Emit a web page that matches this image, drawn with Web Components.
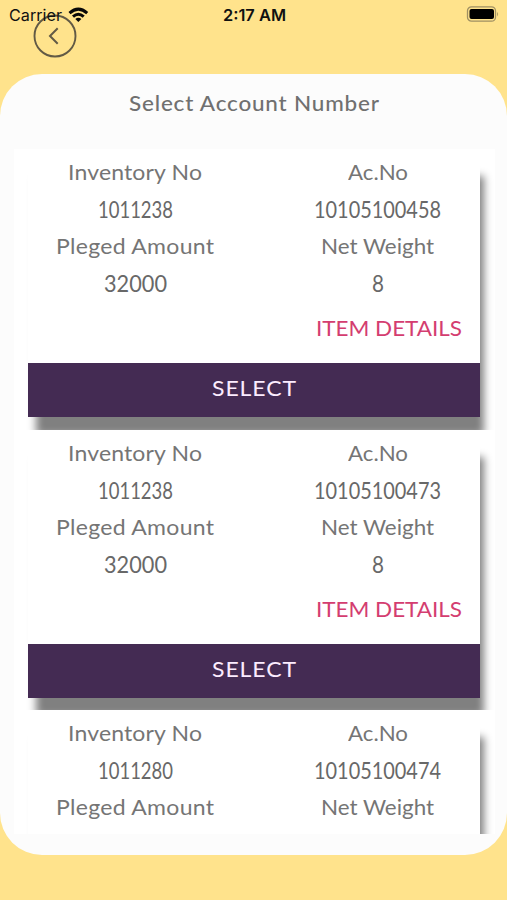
<!DOCTYPE html>
<html lang="en"><head><meta charset="utf-8"><title>Select Account Number</title>
<style>html,body{margin:0;height:100%}body{background:#ffe38c;overflow:hidden;font-family:Lato,"Open Sans",sans-serif;color:#757575}</style></head>
<body>
<account-screen></account-screen>
<script>
// Text run with a fixed width: glyphs are widened up to 7%, tracking takes the rest;
// mode "scale" uses glyph scaling alone.
customElements.define('fit-text', class extends HTMLElement {
  connectedCallback() {
    const text = this.getAttribute('text'), w = +this.getAttribute('w');
    const root = this.attachShadow({mode: 'open'});
    root.innerHTML = `<style>:host{display:inline-block;white-space:nowrap;width:${w}px;text-align:left}span{display:inline-block;transform-origin:0 50%}</style><span></span>`;
    const s = root.querySelector('span');
    s.textContent = text;
    const natural = s.getBoundingClientRect().width, ratio = w / natural;
    const k = this.getAttribute('mode') === 'scale' ? ratio : Math.min(ratio, 1.07);
    s.style.transform = `scaleX(${k})`;
    if (text.length > 1) s.style.letterSpacing = (w / k - natural) / (text.length - 1) + 'px';
  }
});

customElements.define('status-bar', class extends HTMLElement {
  constructor() {
    super();
    this.attachShadow({mode: 'open'}).innerHTML = `<style>
      :host{display:grid;grid-template-columns:1fr auto 1fr;align-items:center;height:30px;padding:0 8px 0 9px;font-family:Inter,"Liberation Sans",sans-serif;font-size:16px;color:#111;line-height:30px;box-sizing:border-box}
      .l{display:flex;align-items:center;gap:6px}.t{font-weight:600}.r{justify-self:end;display:flex}svg{display:block}
    </style>
    <div class="l"><fit-text text="Carrier" w="53"></fit-text><svg width="21" height="16" viewBox="0 0 21 16" style="margin-top:-1px">
      <g fill="none" stroke="#080808" stroke-width="3"><path d="M1.5 6.1Q10.3-1.9 19.2 6.1"/><path d="M5 9.6Q10.3 4.8 15.7 9.6"/></g><path d="M7.3 11.9Q10.3 9.4 13.4 11.9L10.3 15.1Z" fill="#080808"/></svg></div>
    <fit-text class="t" text="2:17 AM" w="63" mode="scale"></fit-text>
    <div class="r"><svg width="33" height="16" viewBox="0 0 33 16" style="margin-top:-2px"><rect x="1.5" y=".8" width="28" height="14.4" rx="4" fill="none" stroke="#a09062" stroke-width="1.3"/><rect x="3.5" y="3" width="24.5" height="10" rx="2" fill="#000"/><path d="M31.2 6q1.8 2 0 4.4z" fill="#a09062"/></svg></div>`;
  }
});

customElements.define('back-button', class extends HTMLElement {
  constructor() {
    super();
    this.attachShadow({mode: 'open'}).innerHTML = `<style>:host{display:block;width:44px;height:44px}svg{display:block}</style>
    <svg width="44" height="44" viewBox="0 0 44 44" fill="none" stroke="#625a45"><circle cx="22" cy="22" r="20.5" stroke-width="1.9"/><path d="M24.7 14.3L17 22l7.7 7.7" stroke-width="2"/></svg>`;
  }
});

customElements.define('account-item', class extends HTMLElement {
  connectedCallback() {
    const a = n => this.getAttribute(n);
    // Items without an amount show only their heading rows.
    const rest = a('amount') ? `
      <fit-cell class="v"><fit-text text="${a('amount')}" w="63" mode="scale"></fit-text></fit-cell><fit-cell class="v"><fit-text text="${a('weight')}" w="12" mode="scale"></fit-text></fit-cell>
    </div><div class="item"><fit-text text="ITEM DETAILS" w="146"></fit-text></div>
    <div class="btn"><fit-text text="SELECT" w="84"></fit-text></div>` : '</div>';
    this.attachShadow({mode: 'open'}).innerHTML = `<style>
      :host{display:block;box-sizing:border-box;height:280.5px;padding:5px 15px 12.5px 14px;overflow:hidden;flex:none;background:#fff}
      .card{height:263px;width:452px;background:#fff;box-shadow:6px 20px 8px -2px #808080;display:flex;flex-direction:column}
      .grid{display:grid;grid-template-columns:214px 271px;margin-right:-33px;grid-auto-rows:37px;text-align:center;line-height:37px;font-size:21.5px}
      .v{color:#686868;font-size:23px;line-height:36px}
      .item{align-self:flex-end;margin:9px 18px 0 0;height:37px;line-height:34px;font-size:21px;color:#d43d70}
      .btn{margin-top:auto;height:54px;line-height:50px;text-align:center;background:#442b53;color:#fcecff;font-size:21.5px}
    </style>
    <div class="card"><div class="grid">
      <fit-cell><fit-text text="Inventory No" w="134"></fit-text></fit-cell><fit-cell><fit-text text="Ac.No" w="60"></fit-text></fit-cell>
      <fit-cell class="v"><fit-text text="${a('inventory')}" w="75" mode="scale"></fit-text></fit-cell><fit-cell class="v"><fit-text text="${a('account')}" w="127" mode="scale"></fit-text></fit-cell>
      <fit-cell><fit-text text="Pleged Amount" w="158"></fit-text></fit-cell><fit-cell><fit-text text="Net Weight" w="113"></fit-text></fit-cell>${rest}</div>`;
  }
});
customElements.define('fit-cell', class extends HTMLElement {
  constructor() { super(); this.attachShadow({mode: 'open'}).innerHTML = '<style>:host{display:block}</style><slot></slot>'; }
});

customElements.define('account-screen', class extends HTMLElement {
  constructor() {
    super();
    this.attachShadow({mode: 'open'}).innerHTML = `<style>
      :host{display:flex;flex-direction:column;height:900px;width:507px;position:relative;background:#ffe38c}
      back-button{position:absolute;left:33px;top:14px}
      status-bar{position:relative}
      .panel{margin-top:44px;height:781px;box-sizing:border-box;border-radius:42px;background:#fcfcfc;padding:0 14px;display:flex;flex-direction:column;overflow:hidden}
      h1{margin:0;height:75px;text-align:center;line-height:57px;font-size:21px;font-weight:500;color:#707070;flex:none}
      .list{height:685px;width:481px;overflow:hidden;background:#fff;display:flex;flex-direction:column}
    </style>
    <back-button></back-button><status-bar></status-bar>
    <div class="panel"><h1><fit-text text="Select Account Number" w="250"></fit-text></h1>
    <div class="list">
      <account-item inventory="1011238" account="10105100458" amount="32000" weight="8"></account-item>
      <account-item inventory="1011238" account="10105100473" amount="32000" weight="8"></account-item>
      <account-item inventory="1011280" account="10105100474"></account-item>
    </div></div>`;
  }
});
</script></body></html>
